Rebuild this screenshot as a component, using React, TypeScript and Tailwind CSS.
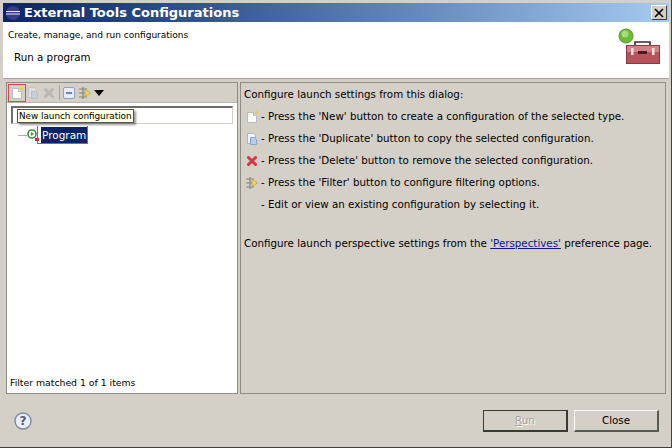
const font = { fontFamily: '"DejaVu Sans", sans-serif' }

function NewIcon({ dim }: { dim?: boolean }) {
  return (
    <svg width="16" height="16" viewBox="0 0 16 16" className={dim ? "opacity-40" : ""}>
      <path d="M3.5 3.5h6l3 3v7h-9z" fill="#fdfdf6" stroke="#b9bcc6" />
      <path d="M9.5 3.5v3h3" fill="#e6e6e0" stroke="#b9bcc6" />
      <circle cx="12.5" cy="3.5" r="1.8" fill="#e8c95a" />
    </svg>
  )
}

function DuplicateIcon({ dim }: { dim?: boolean }) {
  return (
    <svg width="16" height="16" viewBox="0 0 16 16" className={dim ? "opacity-40" : ""}>
      <path d="M3.5 2.5h6l2 2v8h-8z" fill="#f3f5fa" stroke="#a9b3c8" />
      <path d="M6.5 6.5h4l2 2v5h-6z" fill="#b9cdea" stroke="#8ea3c6" />
    </svg>
  )
}

function DeleteIcon({ dim }: { dim?: boolean }) {
  const color = dim ? "#b9b7b0" : "#d8353f"
  return (
    <svg width="16" height="16" viewBox="0 0 16 16">
      <path d="M4.5 4.5l7 7M11.5 4.5l-7 7" stroke={color} strokeWidth="3" strokeLinecap="round" />
    </svg>
  )
}

function FilterIcon() {
  return (
    <svg width="16" height="16" viewBox="0 0 16 16">
      <path d="M2 4h8M2 8h11M2 12h8" stroke="#a39f72" strokeWidth="1.4" />
      <path d="M6 2v12" stroke="#7f8db0" strokeWidth="1.4" />
      <path d="M8 4.5l5.5 3.5L8 11.5z" fill="#f1d34f" stroke="#c2a436" strokeWidth="0.7" />
    </svg>
  )
}

function CollapseIcon() {
  return (
    <svg width="16" height="16" viewBox="0 0 16 16">
      <rect x="2.5" y="2.5" width="11" height="11" rx="1.5" fill="#e6edf8" stroke="#8ea3c6" />
      <path d="M5 8h6" stroke="#4a6aa5" strokeWidth="1.6" />
    </svg>
  )
}

function ToolboxIcon() {
  return (
    <svg width="48" height="44" viewBox="0 0 48 44">
      <path d="M20 21v-4h15v4" fill="none" stroke="#3a2a2a" strokeWidth="1.6" />
      <rect x="11.5" y="20.5" width="33" height="18" fill="#b8535c" stroke="#8a3a42" />
      <rect x="12" y="21" width="32" height="6" fill="#d28389" />
      <rect x="16" y="23" width="2.5" height="7" fill="#f1e4d8" />
      <rect x="37" y="23" width="2.5" height="7" fill="#f1e4d8" />
      <rect x="23" y="26" width="9" height="3" fill="#4a1c20" />
      <circle cx="11" cy="11" r="7" fill="#6dba3a" stroke="#4f9a25" />
      <circle cx="10" cy="9" r="3.5" fill="#a6dc74" />
    </svg>
  )
}

function Line({ icon, text }: { icon?: React.ReactNode; text: string }) {
  return (
    <div className="flex h-[22px] items-center whitespace-nowrap">
      <div className="flex w-[17px] shrink-0 items-center justify-start">{icon}</div>
      <span>{text}</span>
    </div>
  )
}

export default function App() {
  return (
    <div className="h-[448px] w-[672px] overflow-hidden border-r border-b border-[#404040]">
      <div className="flex h-full flex-col border-[3px] border-r-2 border-b-2 border-[#d4d0c8] text-[10.3px] text-black" style={font}>
        {/* title bar */}
        <div className="flex h-[19px] shrink-0 items-center bg-gradient-to-r from-[#0a246a] to-[#a6caf0] pl-[2px] pr-[2px]">
          <svg width="16" height="16" viewBox="0 0 16 16">
            <circle cx="8" cy="8" r="7" fill="#3b3a8c" />
            <path d="M1 6.5h14M1 9h14" stroke="#e8e8f5" strokeWidth="1" />
          </svg>
          <span className="ml-[3px] text-[13px] font-bold text-white">External Tools Configurations</span>
          <div className="ml-auto flex h-[15px] w-[16px] items-center justify-center border border-t-white border-l-white border-r-[#404040] border-b-[#404040] bg-[#d4d0c8]">
            <svg width="10" height="10" viewBox="0 0 10 10">
              <path d="M1 1l8 8M9 1l-8 8" stroke="#000" strokeWidth="1.6" />
            </svg>
          </div>
        </div>

        {/* header */}
        <div className="flex h-[57px] shrink-0 justify-between border-b border-[#a8a59c] bg-white">
          <div>
            <div className="mt-[7px] ml-[5px] text-[9px] leading-[13px]">Create, manage, and run configurations</div>
            <div className="mt-[8px] ml-[11px] text-[10.3px] leading-[15px]">Run a program</div>
          </div>
          <div className="mt-[3px] mr-[6px]">
            <ToolboxIcon />
          </div>
        </div>

        {/* main */}
        <div className="flex min-h-0 flex-1 flex-col bg-[#d4d0c8] px-[3px] pt-[3px]">
          <div className="flex h-[312px] gap-[2px]">
            {/* left panel */}
            <div className="relative flex w-[232px] flex-col border border-[#8f8d86] bg-white">
              <div className="flex h-[20px] shrink-0 items-center border-b border-[#b8b5ac] bg-[#d4d0c8] pl-[1px]">
                <div className="flex h-[18px] w-[18px] items-center justify-center border border-[#e0434b]">
                  <NewIcon />
                </div>
                <div className="-ml-[1px] flex">
                  <DuplicateIcon dim />
                  <DeleteIcon dim />
                </div>
                <div className="mr-[1px] ml-[2px] h-[15px] w-px bg-[#a8a59c]" />
                <CollapseIcon />
                <FilterIcon />
                <svg width="10" height="6" viewBox="0 0 10 6" className="ml-[1px]">
                  <path d="M0 0h10L5 6z" fill="#000" />
                </svg>
              </div>
              <div className="mx-[4px] mt-[3px] h-[18px] shrink-0 border-t-2 border-r border-b border-l-2 border-t-[#6f6d68] border-r-[#d4d0c8] border-b-[#d4d0c8] border-l-[#6f6d68] bg-white" />
              <div className="mt-[2px] flex h-[18px] shrink-0 items-center pl-[11px]">
                <div className="h-px w-[9px] bg-[#b0aea8]" />
                <svg width="12" height="14" viewBox="0 0 12 14">
                  <circle cx="5" cy="6" r="4" fill="#fff" stroke="#3f8f3a" strokeWidth="1.6" />
                  <path d="M4 4l3 2-3 2z" fill="#3f8f3a" />
                  <rect x="8" y="10" width="4" height="3" fill="#c92a32" />
                </svg>
                <div className="-ml-[2px] flex h-[18px] items-center border border-t-0 border-[#e0434b] pl-[3px]">
                  <span className="bg-[#0a246a] px-[1px] text-[10.5px] leading-[16px] text-white">Program</span>
                </div>
              </div>
              <div className="mt-auto pb-[3px] pl-[3px] text-[9.3px] leading-[14px]">Filter matched 1 of 1 items</div>
              {/* tooltip */}
              <div className="absolute top-[26px] left-[10px] border border-[#555] bg-[#ffffe1] px-[1px] text-[8.8px] leading-[12px] whitespace-nowrap shadow-[2px_2px_2px_rgba(0,0,0,0.4)]">
                New launch configuration
              </div>
            </div>

            {/* right panel */}
            <div className="flex flex-1 flex-col border border-[#8f8d86] bg-[#d4d0c8] pt-[2px] pl-[3px]">
              <div className="flex h-[20px] items-center">Configure launch settings from this dialog:</div>
              <div className="mt-[1px]">
                <Line icon={<NewIcon />} text="- Press the 'New' button to create a configuration of the selected type." />
                <Line icon={<DuplicateIcon />} text="- Press the 'Duplicate' button to copy the selected configuration." />
                <Line icon={<DeleteIcon />} text="- Press the 'Delete' button to remove the selected configuration." />
                <Line icon={<FilterIcon />} text="- Press the 'Filter' button to configure filtering options." />
                <Line text="- Edit or view an existing configuration by selecting it." />
              </div>
              <div className="mt-[18px] flex h-[20px] items-center whitespace-nowrap">
                <span>Configure launch perspective settings from the&nbsp;</span>
                <span className="text-[#0a1a8c] underline">'Perspectives'</span>
                <span>&nbsp;preference page.</span>
              </div>
            </div>
          </div>

          {/* footer */}
          <div className="flex flex-1 items-center justify-between pt-[3px] pr-[7px] pl-[7px]">
            <svg width="20" height="20" viewBox="0 0 20 20">
              <circle cx="10" cy="10" r="8" fill="#e9eef6" stroke="#7d8ba5" strokeWidth="1.4" />
              <text x="10" y="14" textAnchor="middle" fontSize="12" fontWeight="700" fill="#4a5a80">?</text>
            </svg>
            <div className="flex gap-[6px]">
              <button className="h-[22px] w-[85px] border border-r-2 border-b-2 border-[#3a3a36] bg-[#d4d0c8] text-[#a5a29a] [text-shadow:1px_1px_0_#fff]">
                <span className="underline">R</span>un
              </button>
              <button className="h-[22px] w-[85px] border border-t-white border-r-2 border-b-2 border-r-[#5a5a55] border-b-[#5a5a55] border-l-white bg-[#d4d0c8]">Close</button>
            </div>
          </div>
        </div>
      </div>
    </div>
  )
}
